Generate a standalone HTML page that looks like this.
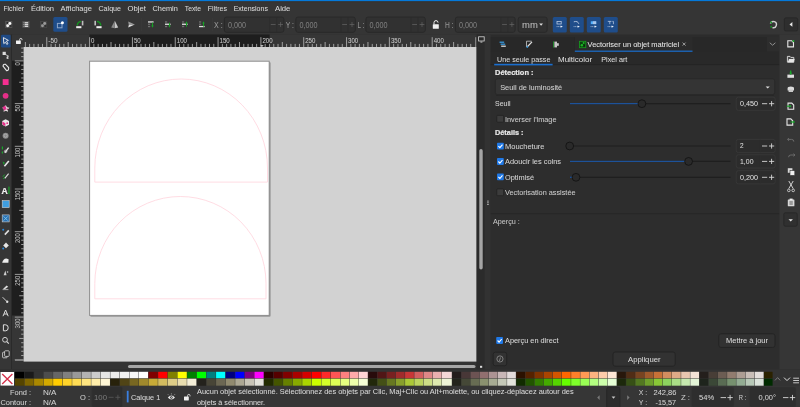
<!DOCTYPE html>
<html><head><meta charset="utf-8"><style>
html,body{margin:0;padding:0;background:#2c2c2c;overflow:hidden}
svg{display:block;will-change:transform}
text{font-family:"Liberation Sans",sans-serif}
</style></head><body>
<svg width="800" height="407" viewBox="0 0 800 407">
<rect x="0.00" y="0.00" width="800.00" height="407.00" fill="#2c2c2c" />
<rect x="0.00" y="0.00" width="800.00" height="1.50" fill="#0479da" />
<rect x="0.00" y="1.50" width="800.00" height="13.50" fill="#353535" />
<rect x="0.00" y="15.00" width="800.00" height="19.50" fill="#353535" />
<rect x="0.00" y="1.60" width="800.00" height="1.00" fill="#37332f" />
<text x="3.40" y="11.40" font-size="7.7" fill="#dadada" stroke="#dadada" stroke-width="0.05" textLength="20.6" lengthAdjust="spacingAndGlyphs" >Fichier</text>
<text x="31.00" y="11.40" font-size="7.7" fill="#dadada" stroke="#dadada" stroke-width="0.05" textLength="23.0" lengthAdjust="spacingAndGlyphs" >Édition</text>
<text x="60.60" y="11.40" font-size="7.7" fill="#dadada" stroke="#dadada" stroke-width="0.05" textLength="31.4" lengthAdjust="spacingAndGlyphs" >Affichage</text>
<text x="98.50" y="11.40" font-size="7.7" fill="#dadada" stroke="#dadada" stroke-width="0.05" textLength="22.5" lengthAdjust="spacingAndGlyphs" >Calque</text>
<text x="127.60" y="11.40" font-size="7.7" fill="#dadada" stroke="#dadada" stroke-width="0.05" textLength="18.4" lengthAdjust="spacingAndGlyphs" >Objet</text>
<text x="152.50" y="11.40" font-size="7.7" fill="#dadada" stroke="#dadada" stroke-width="0.05" textLength="25.3" lengthAdjust="spacingAndGlyphs" >Chemin</text>
<text x="184.80" y="11.40" font-size="7.7" fill="#dadada" stroke="#dadada" stroke-width="0.05" textLength="16.2" lengthAdjust="spacingAndGlyphs" >Texte</text>
<text x="207.80" y="11.40" font-size="7.7" fill="#dadada" stroke="#dadada" stroke-width="0.05" textLength="19.2" lengthAdjust="spacingAndGlyphs" >Filtres</text>
<text x="233.70" y="11.40" font-size="7.7" fill="#dadada" stroke="#dadada" stroke-width="0.05" textLength="34.2" lengthAdjust="spacingAndGlyphs" >Extensions</text>
<text x="275.00" y="11.40" font-size="7.7" fill="#dadada" stroke="#dadada" stroke-width="0.05" textLength="15.4" lengthAdjust="spacingAndGlyphs" >Aide</text>
<g opacity="1.0">
<rect x="5.15" y="21.00" width="7.10" height="6.90" fill="#555555" />
<circle cx="7.35" cy="22.80" r="0.9" fill="#1e1e1e" stroke="none" stroke-width="1" />
<circle cx="10.85" cy="26.00" r="0.9" fill="#2a2a2a" stroke="none" stroke-width="1" />
<circle cx="9.85" cy="23.50" r="1.45" fill="#ffffff" stroke="none" stroke-width="1" />
<circle cx="7.65" cy="25.70" r="1.45" fill="#f4f4f4" stroke="none" stroke-width="1" />
</g>
<rect x="22.30" y="21.00" width="7.30" height="6.90" fill="#505050" />
<rect x="24.60" y="22.10" width="3.60" height="1.30" fill="#d8d8d8" />
<rect x="22.90" y="22.30" width="1.00" height="0.90" fill="#8a8a8a" />
<rect x="24.60" y="23.90" width="3.60" height="1.30" fill="#d8d8d8" />
<rect x="22.90" y="24.10" width="1.00" height="0.90" fill="#8a8a8a" />
<rect x="24.60" y="25.70" width="3.60" height="1.30" fill="#d8d8d8" />
<rect x="22.90" y="25.90" width="1.00" height="0.90" fill="#8a8a8a" />
<g opacity="0.5">
<rect x="40.00" y="21.00" width="7.10" height="6.90" fill="#555555" />
<circle cx="42.20" cy="22.80" r="0.9" fill="#1e1e1e" stroke="none" stroke-width="1" />
<circle cx="45.70" cy="26.00" r="0.9" fill="#2a2a2a" stroke="none" stroke-width="1" />
<circle cx="44.70" cy="23.50" r="1.45" fill="#ffffff" stroke="none" stroke-width="1" />
<circle cx="42.50" cy="25.70" r="1.45" fill="#f4f4f4" stroke="none" stroke-width="1" />
</g>
<rect x="53.30" y="17.00" width="14.20" height="14.70" fill="#1f4d8a" rx="1.5" />
<rect x="57.40" y="23.40" width="4.60" height="4.40" fill="none" stroke="#8ea6c8" stroke-width="1"/>
<circle cx="62.40" cy="22.70" r="1.5" fill="#ffffff" stroke="none" stroke-width="1" />
<path d="M77.2 25.5 Q77.5 21.8 81 21.3" stroke="#139a1f" fill="none" stroke-width="1.3" />
<rect x="81.80" y="20.80" width="1.60" height="4.60" fill="#bdbdbd" />
<rect x="76.20" y="26.20" width="5.20" height="2.00" fill="#f0f0f0" />
<path d="M100.8 25.5 Q100.5 21.8 97 21.3" stroke="#139a1f" fill="none" stroke-width="1.3" />
<rect x="94.40" y="20.80" width="1.60" height="4.60" fill="#bdbdbd" />
<rect x="96.40" y="26.20" width="5.20" height="2.00" fill="#f0f0f0" />
<path d="M114.8 20.8 L118.2 27.4 L114.8 28.2 Z" stroke="none" fill="#c8c8c8" stroke-width="1" />
<path d="M114.8 20.8 L111.2 27.4 L114.8 28.2 Z" stroke="none" fill="#8a8a8a" stroke-width="1" />
<path d="M134.8 24.6 L128.2 21.6 L128.8 25 Z" stroke="none" fill="#9a9a9a" stroke-width="1" />
<path d="M134.8 24.6 L128.2 27.6 L128.8 25 Z" stroke="none" fill="#e0e0e0" stroke-width="1" />
<line x1="141.50" y1="18.00" x2="141.50" y2="31.00" stroke="#3a3a3a" stroke-width="0.6" />
<rect x="148.00" y="21.30" width="5.60" height="1.30" fill="#e0e0e0" />
<rect x="148.00" y="23.60" width="2.20" height="1.30" fill="#6e6e6e" />
<rect x="148.00" y="25.90" width="2.20" height="1.30" fill="#6e6e6e" />
<path d="M151.2 25.6 L152.5 27.8 L153.8 25.6 Z" stroke="none" fill="#17a025" stroke-width="1" />
<rect x="152.00" y="22.60" width="1.00" height="3.40" fill="#17a025" />
<rect x="165.00" y="21.30" width="2.20" height="1.30" fill="#6e6e6e" />
<rect x="165.00" y="23.60" width="5.60" height="1.30" fill="#e0e0e0" />
<rect x="165.00" y="25.90" width="2.20" height="1.30" fill="#6e6e6e" />
<path d="M168.2 25.6 L169.5 27.8 L170.8 25.6 Z" stroke="none" fill="#17a025" stroke-width="1" />
<rect x="169.00" y="22.60" width="1.00" height="3.40" fill="#17a025" />
<rect x="182.00" y="21.30" width="2.20" height="1.30" fill="#6e6e6e" />
<rect x="182.00" y="23.60" width="5.60" height="1.30" fill="#e0e0e0" />
<rect x="182.00" y="25.90" width="2.20" height="1.30" fill="#6e6e6e" />
<path d="M185.2 23.4 L186.5 21.2 L187.8 23.4 Z" stroke="none" fill="#17a025" stroke-width="1" />
<rect x="186.00" y="23.00" width="1.00" height="3.60" fill="#17a025" />
<rect x="199.00" y="21.30" width="2.20" height="1.30" fill="#6e6e6e" />
<rect x="199.00" y="23.60" width="2.20" height="1.30" fill="#6e6e6e" />
<rect x="199.00" y="25.90" width="5.60" height="1.30" fill="#e0e0e0" />
<path d="M202.2 23.4 L203.5 21.2 L204.8 23.4 Z" stroke="none" fill="#17a025" stroke-width="1" />
<rect x="203.00" y="23.00" width="1.00" height="3.60" fill="#17a025" />
<line x1="212.50" y1="18.00" x2="212.50" y2="31.00" stroke="#3a3a3a" stroke-width="0.6" />
<text x="214.00" y="27.80" font-size="8.3" fill="#979797" stroke="#979797" stroke-width="0.05" textLength="8.6" lengthAdjust="spacingAndGlyphs" >X :</text>
<rect x="224.30" y="17.00" width="59.60" height="15.30" fill="#313131" rx="2.2" stroke="#272727" stroke-width="0.8"/>
<line x1="269.60" y1="17.50" x2="269.60" y2="32.00" stroke="#2a2a2a" stroke-width="0.5" />
<line x1="276.60" y1="17.50" x2="276.60" y2="32.00" stroke="#2a2a2a" stroke-width="0.5" />
<text x="228.00" y="27.80" font-size="8.3" fill="#7e7e7e" stroke="#7e7e7e" stroke-width="0.05" textLength="18.0" lengthAdjust="spacingAndGlyphs" >0,000</text>
<line x1="270.80" y1="24.50" x2="275.60" y2="24.50" stroke="#666666" stroke-width="0.7" />
<line x1="278.20" y1="24.50" x2="283.00" y2="24.50" stroke="#666666" stroke-width="0.7" />
<line x1="280.60" y1="22.10" x2="280.60" y2="26.90" stroke="#666666" stroke-width="0.7" />
<text x="285.80" y="27.80" font-size="8.3" fill="#979797" stroke="#979797" stroke-width="0.05" textLength="8.2" lengthAdjust="spacingAndGlyphs" >Y :</text>
<rect x="295.80" y="17.00" width="59.50" height="15.30" fill="#313131" rx="2.2" stroke="#272727" stroke-width="0.8"/>
<line x1="341.00" y1="17.50" x2="341.00" y2="32.00" stroke="#2a2a2a" stroke-width="0.5" />
<line x1="348.00" y1="17.50" x2="348.00" y2="32.00" stroke="#2a2a2a" stroke-width="0.5" />
<text x="299.50" y="27.80" font-size="8.3" fill="#7e7e7e" stroke="#7e7e7e" stroke-width="0.05" textLength="18.0" lengthAdjust="spacingAndGlyphs" >0,000</text>
<line x1="342.20" y1="24.50" x2="347.00" y2="24.50" stroke="#666666" stroke-width="0.7" />
<line x1="349.60" y1="24.50" x2="354.40" y2="24.50" stroke="#666666" stroke-width="0.7" />
<line x1="352.00" y1="22.10" x2="352.00" y2="26.90" stroke="#666666" stroke-width="0.7" />
<text x="357.50" y="27.80" font-size="8.3" fill="#979797" stroke="#979797" stroke-width="0.05" textLength="6.7" lengthAdjust="spacingAndGlyphs" >L :</text>
<rect x="365.90" y="17.00" width="59.40" height="15.30" fill="#313131" rx="2.2" stroke="#272727" stroke-width="0.8"/>
<line x1="411.00" y1="17.50" x2="411.00" y2="32.00" stroke="#2a2a2a" stroke-width="0.5" />
<line x1="418.00" y1="17.50" x2="418.00" y2="32.00" stroke="#2a2a2a" stroke-width="0.5" />
<text x="369.60" y="27.80" font-size="8.3" fill="#7e7e7e" stroke="#7e7e7e" stroke-width="0.05" textLength="18.0" lengthAdjust="spacingAndGlyphs" >0,000</text>
<line x1="412.20" y1="24.50" x2="417.00" y2="24.50" stroke="#666666" stroke-width="0.7" />
<line x1="419.60" y1="24.50" x2="424.40" y2="24.50" stroke="#666666" stroke-width="0.7" />
<line x1="422.00" y1="22.10" x2="422.00" y2="26.90" stroke="#666666" stroke-width="0.7" />
<text x="445.00" y="27.80" font-size="8.3" fill="#979797" stroke="#979797" stroke-width="0.05" textLength="8.5" lengthAdjust="spacingAndGlyphs" >H :</text>
<rect x="455.30" y="17.00" width="59.90" height="15.30" fill="#313131" rx="2.2" stroke="#272727" stroke-width="0.8"/>
<line x1="500.90" y1="17.50" x2="500.90" y2="32.00" stroke="#2a2a2a" stroke-width="0.5" />
<line x1="507.90" y1="17.50" x2="507.90" y2="32.00" stroke="#2a2a2a" stroke-width="0.5" />
<text x="459.00" y="27.80" font-size="8.3" fill="#7e7e7e" stroke="#7e7e7e" stroke-width="0.05" textLength="18.0" lengthAdjust="spacingAndGlyphs" >0,000</text>
<line x1="502.10" y1="24.50" x2="506.90" y2="24.50" stroke="#666666" stroke-width="0.7" />
<line x1="509.50" y1="24.50" x2="514.30" y2="24.50" stroke="#666666" stroke-width="0.7" />
<line x1="511.90" y1="22.10" x2="511.90" y2="26.90" stroke="#666666" stroke-width="0.7" />
<rect x="432.80" y="24.20" width="6.00" height="4.60" fill="#f0f0f0" rx="0.5" />
<path d="M434 24.4 V22.6 A2 2 0 0 1 438 22.6" stroke="#f0f0f0" fill="none" stroke-width="1" />
<rect x="518.20" y="17.00" width="29.00" height="15.30" fill="#313131" rx="2.2" stroke="#272727" stroke-width="0.8"/>
<text x="522.00" y="28.20" font-size="8.5" fill="#bfbfbf" stroke="#bfbfbf" stroke-width="0.05" textLength="15.8" lengthAdjust="spacingAndGlyphs" >mm</text>
<path d="M539.2 23.6 L543 23.6 L541.1 25.8 Z" stroke="none" fill="#dddddd" stroke-width="1" />
<rect x="552.80" y="17.10" width="14.00" height="15.30" fill="#1f4d8a" rx="1.5" />
<rect x="569.80" y="17.10" width="14.00" height="15.30" fill="#1f4d8a" rx="1.5" />
<rect x="586.80" y="17.10" width="14.00" height="15.30" fill="#1f4d8a" rx="1.5" />
<rect x="603.80" y="17.10" width="14.00" height="15.30" fill="#1f4d8a" rx="1.5" />
<rect x="557.00" y="21.40" width="4.20" height="2.60" fill="none" stroke="#b8c8e0" stroke-width="0.8"/>
<path d="M556.5999999999999 26.6 H560.8" stroke="#b8c8e0" fill="none" stroke-width="0.8" stroke-dasharray="1 0.6"/>
<path d="M560.5999999999999 25.4 L562.8 26.6 L560.5999999999999 27.8 Z" stroke="none" fill="#e8eef8" stroke-width="1" />
<path d="M573.8 21.8 Q577.8 20.6 578.8 23.8" stroke="#b8c8e0" fill="none" stroke-width="0.9" />
<path d="M573.5999999999999 26.6 H577.8" stroke="#b8c8e0" fill="none" stroke-width="0.8" stroke-dasharray="1 0.6"/>
<path d="M577.5999999999999 25.4 L579.8 26.6 L577.5999999999999 27.8 Z" stroke="none" fill="#e8eef8" stroke-width="1" />
<rect x="590.80" y="21.30" width="5.40" height="2.80" fill="#4fb0ff" />
<rect x="592.80" y="21.30" width="3.40" height="2.80" fill="#a8c4e8" />
<path d="M590.5999999999999 26.6 H594.8" stroke="#b8c8e0" fill="none" stroke-width="0.8" stroke-dasharray="1 0.6"/>
<path d="M594.5999999999999 25.4 L596.8 26.6 L594.5999999999999 27.8 Z" stroke="none" fill="#e8eef8" stroke-width="1" />
<path d="M607.8 21.4 H611.4 M609.8 21.4 V24.2 M612.4 21.4 H613.4 V24.2" stroke="#b8c8e0" fill="none" stroke-width="0.8" />
<path d="M607.5999999999999 26.6 H611.8" stroke="#b8c8e0" fill="none" stroke-width="0.8" stroke-dasharray="1 0.6"/>
<path d="M611.5999999999999 25.4 L613.8 26.6 L611.5999999999999 27.8 Z" stroke="none" fill="#e8eef8" stroke-width="1" />
<circle cx="773.30" cy="24.60" r="3.1" fill="none" stroke="#d0d0d0" stroke-width="1.4" stroke-dasharray="14 6" transform="rotate(200 773.3 24.6)"/>
<circle cx="771.20" cy="22.40" r="0.9" fill="#10a020" stroke="none" stroke-width="1" />
<circle cx="771.20" cy="26.80" r="0.9" fill="#10a020" stroke="none" stroke-width="1" />
<rect x="784.30" y="17.80" width="13.40" height="13.20" fill="#2e2e2e" rx="1.5" stroke="#242424" stroke-width="0.6"/>
<path d="M789.5 24.4 L792.4 22 L792.4 26.8 Z" stroke="none" fill="#e8e8e8" stroke-width="1" />
<rect x="0.00" y="34.50" width="12.00" height="335.00" fill="#363636" />
<line x1="11.60" y1="34.50" x2="11.60" y2="369.50" stroke="#262626" stroke-width="0.8" />
<rect x="1.00" y="34.80" width="9.60" height="12.70" fill="#1f4a85" rx="1.2" />
<path d="M3.4 37.6 L8.4 40.4 L6.4 41.2 L8 43.6 L6.8 44.4 L5.4 42.2 L3.8 43.6 Z" stroke="#f0f0f0" fill="#1f4a85" stroke-width="0.9" />
<rect x="2.60" y="51.80" width="3.20" height="3.20" fill="#dcdcdc" />
<path d="M5.2 54.4 L8.6 56.2 L7 56.8 L7.8 58.4" stroke="#dcdcdc" fill="none" stroke-width="0.8" />
<rect x="6.60" y="57.20" width="1.80" height="1.60" fill="#dcdcdc" />
<path d="M3 66.2 Q3.4 63.8 5.6 64.4 L8.6 67.6 Q9 70.6 6.6 70.6 Z" stroke="#e8e8e8" fill="none" stroke-width="1.1" />
<rect x="2.70" y="79.10" width="5.90" height="5.90" fill="#f52f91" />
<circle cx="5.60" cy="95.80" r="2.9" fill="#e52f88" stroke="none" stroke-width="1" />
<path d="M5.80 105.00 L6.98 107.18 L9.41 107.63 L7.70 109.42 L8.03 111.87 L5.80 110.80 L3.57 111.87 L3.90 109.42 L2.19 107.63 L4.62 107.18 Z" stroke="none" fill="#ececec" stroke-width="1" />
<path d="M2.4 107.6 L5 105.4 L6.6 108.6 L4.6 110.8 Z" stroke="none" fill="#e0308c" stroke-width="1" />
<circle cx="7.40" cy="109.40" r="0.8" fill="#b04070" stroke="none" stroke-width="1" />
<path d="M5.6 119.2 L9 121 V124.8 L5.6 126.6 L2.2 124.8 V121 Z" stroke="none" fill="#e8e8e8" stroke-width="1" />
<path d="M2.4 121.6 L5.4 123.2 L5.4 126.2 L2.4 124.6 Z" stroke="none" fill="#e52f88" stroke-width="1" />
<circle cx="7.20" cy="123.20" r="0.9" fill="#e52f88" stroke="none" stroke-width="1" />
<circle cx="5.60" cy="135.70" r="3" fill="#8a8a8a" stroke="none" stroke-width="1" />
<circle cx="5.60" cy="135.70" r="1.6" fill="none" stroke="#c0c0c0" stroke-width="0.6" />
<path d="M2.4 146.6 V149.4 M2.4 151.4 V153.4" stroke="#19a82a" fill="none" stroke-width="1.2" />
<path d="M5 152.6 L8.6 147.6" stroke="#e0e0e0" fill="none" stroke-width="1.4" />
<circle cx="5.60" cy="151.40" r="1.2" fill="none" stroke="#e0e0e0" stroke-width="0.7" />
<path d="M2.6 161.4 L4.8 162.8 L3.8 165 Z" stroke="none" fill="#19a82a" stroke-width="1" />
<path d="M4.4 166.2 L8.8 161" stroke="#e8e8e8" fill="none" stroke-width="1.6" />
<path d="M2.8 176.8 L4.6 174.6 M3.2 179 L5 177" stroke="#19a82a" fill="none" stroke-width="1" />
<path d="M4.8 178.4 L8.6 173.6" stroke="#dcdcdc" fill="none" stroke-width="1.1" />
<text x="1.60" y="193.60" font-size="8.6" fill="#f1f1f1" stroke="#f1f1f1" stroke-width="0.22" textLength="6.2" lengthAdjust="spacingAndGlyphs" font-weight="bold" >A</text>
<rect x="8.40" y="186.60" width="1.10" height="7.40" fill="#19a82a" />
<rect x="2.20" y="200.60" width="7.00" height="7.00" fill="#3f9ee0" stroke="#d0d0d0" stroke-width="0.6"/>
<rect x="2.20" y="214.90" width="7.00" height="7.00" fill="#2a6fb0" stroke="#d0d0d0" stroke-width="0.6"/>
<path d="M3.6 216.4 L7.8 220.6 M7.8 216.4 L3.6 220.6" stroke="#7cc8f0" fill="none" stroke-width="0.9" />
<path d="M4.8 234.6 L8.8 230.4" stroke="#e0e0e0" fill="none" stroke-width="1.6" />
<circle cx="3.20" cy="229.80" r="1" fill="#2a8ae0" stroke="none" stroke-width="1" />
<path d="M6 242.6 L8.8 245.4 L6 248.2 L3.2 245.4 Z" stroke="none" fill="#e6e6e6" stroke-width="1" />
<circle cx="3.20" cy="248.60" r="1" fill="#2a8ae0" stroke="none" stroke-width="1" />
<path d="M2.2 262.8 Q3 258.6 6.4 258.4 L8.6 259.2 L8.4 262.8 Z" stroke="none" fill="#eeeeee" stroke-width="1" />
<path d="M3.6 275.2 L5.4 270.4 L6.6 275.2 Z" stroke="none" fill="#d0d0d0" stroke-width="1" />
<circle cx="7.60" cy="272.00" r="0.8" fill="#d0d0d0" stroke="none" stroke-width="1" />
<path d="M3 289 L6.6 285.4 L8.2 286.8 L5.2 289 Z" stroke="none" fill="#dcdcdc" stroke-width="1" />
<line x1="2.60" y1="289.60" x2="8.40" y2="289.60" stroke="#dcdcdc" stroke-width="0.7" />
<path d="M2.6 297.2 L6.4 301" stroke="#e0e0e0" fill="none" stroke-width="0.9" />
<circle cx="7.20" cy="301.80" r="1.2" fill="#e0e0e0" stroke="none" stroke-width="1" />
<path d="M3 316.2 L5.6 310 L8.2 316.2 M4 314 H7.2" stroke="#dcdcdc" fill="none" stroke-width="1" />
<path d="M3.4 324.8 H5.6 Q8.2 324.8 8.2 327.8 Q8.2 330.8 5.6 330.8 H3.4 Z" stroke="#e0e0e0" fill="none" stroke-width="1" />
<circle cx="5.00" cy="339.80" r="2.4" fill="none" stroke="#e0e0e0" stroke-width="0.9" />
<path d="M6.8 341.6 L8.8 343.6" stroke="#e0e0e0" fill="none" stroke-width="1.1" />
<rect x="2.60" y="352.20" width="4.60" height="5.60" fill="none" rx="0.8" stroke="#dcdcdc" stroke-width="0.8"/>
<rect x="4.60" y="350.80" width="4.60" height="5.60" fill="#2e2e2e" rx="0.8" stroke="#dcdcdc" stroke-width="0.8"/>
<rect x="12.00" y="34.50" width="465.00" height="12.50" fill="#363636" />
<rect x="89.50" y="34.50" width="180.10" height="12.50" fill="#1e1e1e" />
<rect x="12.00" y="47.00" width="11.60" height="314.50" fill="#363636" />
<rect x="12.00" y="60.75" width="11.60" height="254.70" fill="#1e1e1e" />
<rect x="16.00" y="40.40" width="4.80" height="3.60" fill="#f2f2f2" rx="0.4" />
<path d="M19.6 40.6 V39.6 A1.2 1.2 0 0 1 22 39.6 V40.2" stroke="#f2f2f2" fill="none" stroke-width="0.8" />
<path d="M25.36 42 V47 M29.64 43.9 V47 M33.93 43.9 V47 M38.21 43.9 V47 M42.49 43.9 V47 M46.77 37.2 V47 M51.06 43.9 V47 M55.34 43.9 V47 M59.62 43.9 V47 M63.90 43.9 V47 M68.19 42 V47 M72.47 43.9 V47 M76.75 43.9 V47 M81.03 43.9 V47 M85.32 43.9 V47 M89.60 37.2 V47 M93.88 43.9 V47 M98.16 43.9 V47 M102.45 43.9 V47 M106.73 43.9 V47 M111.01 42 V47 M115.29 43.9 V47 M119.58 43.9 V47 M123.86 43.9 V47 M128.14 43.9 V47 M132.43 37.2 V47 M136.71 43.9 V47 M140.99 43.9 V47 M145.27 43.9 V47 M149.56 43.9 V47 M153.84 42 V47 M158.12 43.9 V47 M162.40 43.9 V47 M166.69 43.9 V47 M170.97 43.9 V47 M175.25 37.2 V47 M179.53 43.9 V47 M183.81 43.9 V47 M188.10 43.9 V47 M192.38 43.9 V47 M196.66 42 V47 M200.94 43.9 V47 M205.23 43.9 V47 M209.51 43.9 V47 M213.79 43.9 V47 M218.07 37.2 V47 M222.36 43.9 V47 M226.64 43.9 V47 M230.92 43.9 V47 M235.21 43.9 V47 M239.49 42 V47 M243.77 43.9 V47 M248.05 43.9 V47 M252.34 43.9 V47 M256.62 43.9 V47 M260.90 37.2 V47 M265.18 43.9 V47 M269.47 43.9 V47 M273.75 43.9 V47 M278.03 43.9 V47 M282.31 42 V47 M286.60 43.9 V47 M290.88 43.9 V47 M295.16 43.9 V47 M299.44 43.9 V47 M303.73 37.2 V47 M308.01 43.9 V47 M312.29 43.9 V47 M316.57 43.9 V47 M320.86 43.9 V47 M325.14 42 V47 M329.42 43.9 V47 M333.70 43.9 V47 M337.99 43.9 V47 M342.27 43.9 V47 M346.55 37.2 V47 M350.83 43.9 V47 M355.12 43.9 V47 M359.40 43.9 V47 M363.68 43.9 V47 M367.96 42 V47 M372.25 43.9 V47 M376.53 43.9 V47 M380.81 43.9 V47 M385.09 43.9 V47 M389.38 37.2 V47 M393.66 43.9 V47 M397.94 43.9 V47 M402.22 43.9 V47 M406.50 43.9 V47 M410.79 42 V47 M415.07 43.9 V47 M419.35 43.9 V47 M423.63 43.9 V47 M427.92 43.9 V47 M432.20 37.2 V47 M436.48 43.9 V47 M440.76 43.9 V47 M445.05 43.9 V47 M449.33 43.9 V47 M453.61 42 V47 M457.89 43.9 V47 M462.18 43.9 V47 M466.46 43.9 V47 M470.74 43.9 V47 M475.8 37.2 V47" stroke="#c4c4c4" fill="none" stroke-width="0.75" />
<text x="48.27" y="43.00" font-size="6.6" fill="#c9c9c9" stroke="#c9c9c9" stroke-width="0.05" textLength="9.2" lengthAdjust="spacingAndGlyphs" >-50</text>
<text x="91.10" y="43.00" font-size="6.6" fill="#c9c9c9" stroke="#c9c9c9" stroke-width="0.05" textLength="3.4" lengthAdjust="spacingAndGlyphs" >0</text>
<text x="133.93" y="43.00" font-size="6.6" fill="#c9c9c9" stroke="#c9c9c9" stroke-width="0.05" textLength="6.8" lengthAdjust="spacingAndGlyphs" >50</text>
<text x="176.75" y="43.00" font-size="6.6" fill="#c9c9c9" stroke="#c9c9c9" stroke-width="0.05" textLength="10.2" lengthAdjust="spacingAndGlyphs" >100</text>
<text x="219.57" y="43.00" font-size="6.6" fill="#c9c9c9" stroke="#c9c9c9" stroke-width="0.05" textLength="10.2" lengthAdjust="spacingAndGlyphs" >150</text>
<text x="262.40" y="43.00" font-size="6.6" fill="#c9c9c9" stroke="#c9c9c9" stroke-width="0.05" textLength="10.2" lengthAdjust="spacingAndGlyphs" >200</text>
<text x="305.23" y="43.00" font-size="6.6" fill="#c9c9c9" stroke="#c9c9c9" stroke-width="0.05" textLength="10.2" lengthAdjust="spacingAndGlyphs" >250</text>
<text x="348.05" y="43.00" font-size="6.6" fill="#c9c9c9" stroke="#c9c9c9" stroke-width="0.05" textLength="10.2" lengthAdjust="spacingAndGlyphs" >300</text>
<text x="390.88" y="43.00" font-size="6.6" fill="#c9c9c9" stroke="#c9c9c9" stroke-width="0.05" textLength="10.2" lengthAdjust="spacingAndGlyphs" >350</text>
<text x="433.70" y="43.00" font-size="6.6" fill="#c9c9c9" stroke="#c9c9c9" stroke-width="0.05" textLength="10.2" lengthAdjust="spacingAndGlyphs" >400</text>
<path d="M260.3 45.2 L263.6 45.2 L261.95 47 Z" stroke="none" fill="#e8e8e8" stroke-width="1" />
<path d="M21.2 48.09 H23.6 M21.2 52.36 H23.6 M21.2 56.63 H23.6 M14.8 60.90 H23.6 M21.2 65.17 H23.6 M21.2 69.44 H23.6 M21.2 73.71 H23.6 M21.2 77.98 H23.6 M19.2 82.25 H23.6 M21.2 86.52 H23.6 M21.2 90.79 H23.6 M21.2 95.06 H23.6 M21.2 99.33 H23.6 M14.8 103.60 H23.6 M21.2 107.87 H23.6 M21.2 112.14 H23.6 M21.2 116.41 H23.6 M21.2 120.68 H23.6 M19.2 124.95 H23.6 M21.2 129.22 H23.6 M21.2 133.49 H23.6 M21.2 137.76 H23.6 M21.2 142.03 H23.6 M14.8 146.30 H23.6 M21.2 150.57 H23.6 M21.2 154.84 H23.6 M21.2 159.11 H23.6 M21.2 163.38 H23.6 M19.2 167.65 H23.6 M21.2 171.92 H23.6 M21.2 176.19 H23.6 M21.2 180.46 H23.6 M21.2 184.73 H23.6 M14.8 189.00 H23.6 M21.2 193.27 H23.6 M21.2 197.54 H23.6 M21.2 201.81 H23.6 M21.2 206.08 H23.6 M19.2 210.35 H23.6 M21.2 214.62 H23.6 M21.2 218.89 H23.6 M21.2 223.16 H23.6 M21.2 227.43 H23.6 M14.8 231.70 H23.6 M21.2 235.97 H23.6 M21.2 240.24 H23.6 M21.2 244.51 H23.6 M21.2 248.78 H23.6 M19.2 253.05 H23.6 M21.2 257.32 H23.6 M21.2 261.59 H23.6 M21.2 265.86 H23.6 M21.2 270.13 H23.6 M14.8 274.40 H23.6 M21.2 278.67 H23.6 M21.2 282.94 H23.6 M21.2 287.21 H23.6 M21.2 291.48 H23.6 M19.2 295.75 H23.6 M21.2 300.02 H23.6 M21.2 304.29 H23.6 M21.2 308.56 H23.6 M21.2 312.83 H23.6 M14.8 317.10 H23.6 M21.2 321.37 H23.6 M21.2 325.64 H23.6 M21.2 329.91 H23.6 M21.2 334.18 H23.6 M19.2 338.45 H23.6 M21.2 342.72 H23.6 M21.2 346.99 H23.6 M21.2 351.26 H23.6 M21.2 355.53 H23.6 M14.8 359.80 H23.6" stroke="#c4c4c4" fill="none" stroke-width="0.75" />
<text x="0" y="0" font-size="6.8" fill="#c4c4c4" text-anchor="end" textLength="3.3" lengthAdjust="spacingAndGlyphs" transform="translate(20.2 62.30) rotate(-90)">0</text>
<text x="0" y="0" font-size="6.8" fill="#c4c4c4" text-anchor="end" textLength="6.6" lengthAdjust="spacingAndGlyphs" transform="translate(20.2 105.00) rotate(-90)">50</text>
<text x="0" y="0" font-size="6.8" fill="#c4c4c4" text-anchor="end" textLength="9.9" lengthAdjust="spacingAndGlyphs" transform="translate(20.2 147.70) rotate(-90)">100</text>
<text x="0" y="0" font-size="6.8" fill="#c4c4c4" text-anchor="end" textLength="9.9" lengthAdjust="spacingAndGlyphs" transform="translate(20.2 190.40) rotate(-90)">150</text>
<text x="0" y="0" font-size="6.8" fill="#c4c4c4" text-anchor="end" textLength="9.9" lengthAdjust="spacingAndGlyphs" transform="translate(20.2 233.10) rotate(-90)">200</text>
<text x="0" y="0" font-size="6.8" fill="#c4c4c4" text-anchor="end" textLength="9.9" lengthAdjust="spacingAndGlyphs" transform="translate(20.2 275.80) rotate(-90)">250</text>
<text x="0" y="0" font-size="6.8" fill="#c4c4c4" text-anchor="end" textLength="9.9" lengthAdjust="spacingAndGlyphs" transform="translate(20.2 318.50) rotate(-90)">300</text>
<line x1="15.00" y1="360.70" x2="23.60" y2="360.70" stroke="#8a8a8a" stroke-width="1" />
<rect x="12.00" y="361.00" width="464.60" height="8.60" fill="#333333" />
<rect x="23.60" y="47.00" width="453.00" height="314.60" fill="#d2d2d2" />
<rect x="90.40" y="62.20" width="180.40" height="254.80" fill="#c0c0c0" rx="1" />
<rect x="90.20" y="62.00" width="180.20" height="254.40" fill="#8a8a8a" rx="1" />
<rect x="89.60" y="61.20" width="179.60" height="254.20" fill="#ffffff" stroke="#8e8e8e" stroke-width="1"/>
<path d="M94.8 182.1 L94.8 168 A86.35 89 0 0 1 267.5 168 L267.5 182.1 Z" stroke="#ffd6de" fill="none" stroke-width="0.85" />
<path d="M94.8 298.8 L94.8 283.5 A85.6 87 0 0 1 266 283.5 L266 298.8 Z" stroke="#ffd6de" fill="none" stroke-width="0.85" />
<rect x="476.60" y="34.50" width="8.00" height="335.00" fill="#2b2b2b" />
<rect x="484.60" y="34.50" width="6.20" height="335.00" fill="#323232" />
<rect x="128.00" y="364.90" width="347.50" height="3.20" fill="#a6a6a6" rx="1.6" />
<rect x="479.30" y="149.00" width="3.40" height="120.50" fill="#a6a6a6" rx="1.7" />
<rect x="480.00" y="365.80" width="2.20" height="2.00" fill="#d8d8d8" />
<rect x="478.60" y="36.80" width="5.60" height="4.20" fill="none" stroke="#d8d8d8" stroke-width="0.8"/>
<rect x="480.40" y="41.60" width="2.00" height="0.90" fill="#d8d8d8" />
<rect x="487.20" y="200.60" width="1.50" height="1.00" fill="#b8b8b8" />
<rect x="487.20" y="202.30" width="1.50" height="1.00" fill="#b8b8b8" />
<rect x="487.20" y="204.00" width="1.50" height="1.00" fill="#b8b8b8" />
<rect x="490.80" y="37.00" width="288.70" height="332.50" fill="#2d2d2d" />
<rect x="490.80" y="37.00" width="288.70" height="14.80" fill="#282828" />
<rect x="574.50" y="37.00" width="118.00" height="14.80" fill="#2b2b2b" />
<rect x="574.50" y="50.60" width="118.00" height="1.60" fill="#1a6fcf" />
<line x1="574.50" y1="37.00" x2="574.50" y2="52.00" stroke="#252525" stroke-width="0.6" />
<rect x="767.00" y="37.00" width="12.50" height="14.80" fill="#2d2d2d" />
<path d="M769.8 42.8 L772.6 45.2 L775.4 42.8" stroke="#9a9a9a" fill="none" stroke-width="0.9" />
<rect x="499.60" y="41.60" width="4.60" height="1.20" fill="#3aa0e8" />
<rect x="500.60" y="43.60" width="4.60" height="1.20" fill="#3aa0e8" />
<rect x="501.20" y="45.60" width="4.60" height="1.20" fill="#e8e8e8" />
<path d="M526.5 47 V41.2 H531.6" stroke="#c8c8c8" fill="none" stroke-width="0.8" />
<line x1="527.60" y1="46.50" x2="532.00" y2="41.80" stroke="#e0e0e0" stroke-width="1.2" />
<circle cx="527.30" cy="46.90" r="0.9" fill="#3aa0e8" stroke="none" stroke-width="1" />
<rect x="553.20" y="41.40" width="0.90" height="6.20" fill="#22a030" />
<rect x="554.40" y="41.60" width="2.60" height="5.80" fill="#c8c8c8" />
<rect x="557.00" y="43.20" width="1.80" height="2.60" fill="#c8c8c8" />
<rect x="579.40" y="41.30" width="6.40" height="6.40" fill="#0c3f10" stroke="#17a01e" stroke-width="0.8"/>
<circle cx="581.90" cy="45.30" r="1.3" fill="#1cb424" stroke="none" stroke-width="1" />
<circle cx="583.60" cy="42.90" r="1.0" fill="#1cb424" stroke="none" stroke-width="1" />
<circle cx="584.20" cy="45.60" r="0.8" fill="#0a2a0c" stroke="none" stroke-width="1" />
<text x="587.60" y="47.00" font-size="7.7" fill="#e4e4e4" stroke="#e4e4e4" stroke-width="0.05" textLength="91.5" lengthAdjust="spacingAndGlyphs" >Vectoriser un objet matriciel</text>
<path d="M682.6 42.6 L685.6 45.6 M685.6 42.6 L682.6 45.6" stroke="#b8b8b8" fill="none" stroke-width="0.8" />
<rect x="490.80" y="51.80" width="288.70" height="13.00" fill="#292929" />
<text x="497.00" y="62.00" font-size="7.7" fill="#dddddd" stroke="#dddddd" stroke-width="0.05" textLength="53.4" lengthAdjust="spacingAndGlyphs" >Une seule passe</text>
<text x="558.00" y="62.00" font-size="7.7" fill="#dddddd" stroke="#dddddd" stroke-width="0.05" textLength="34.2" lengthAdjust="spacingAndGlyphs" >Multicolor</text>
<text x="601.20" y="62.00" font-size="7.7" fill="#dddddd" stroke="#dddddd" stroke-width="0.05" textLength="26.2" lengthAdjust="spacingAndGlyphs" >Pixel art</text>
<rect x="490.80" y="64.80" width="288.70" height="148.80" fill="#2d2d2d" />
<line x1="490.80" y1="64.60" x2="779.50" y2="64.60" stroke="#232323" stroke-width="0.8" />
<rect x="494.20" y="63.80" width="58.40" height="1.60" fill="#1a6fcf" />
<line x1="490.80" y1="213.60" x2="779.50" y2="213.60" stroke="#262626" stroke-width="0.8" />
<text x="495.00" y="75.20" font-size="7.7" fill="#e8e8e8" stroke="#e8e8e8" stroke-width="0.22" textLength="38.5" lengthAdjust="spacingAndGlyphs" font-weight="bold" >Détection :</text>
<line x1="496.00" y1="95.20" x2="774.00" y2="95.20" stroke="#252525" stroke-width="1" />
<rect x="495.30" y="78.80" width="279.40" height="15.80" fill="#343434" rx="2.2" stroke="#272727" stroke-width="0.8"/>
<text x="500.20" y="89.90" font-size="7.7" fill="#d3d3d3" stroke="#d3d3d3" stroke-width="0.05" textLength="62.0" lengthAdjust="spacingAndGlyphs" >Seuil de luminosité</text>
<path d="M765.6 86.4 L769.8 86.4 L767.7 88.6 Z" stroke="none" fill="#dedede" stroke-width="1" />
<text x="495.00" y="106.40" font-size="7.7" fill="#d6d6d6" stroke="#d6d6d6" stroke-width="0.05" textLength="15.5" lengthAdjust="spacingAndGlyphs" >Seuil</text>
<line x1="570.00" y1="103.70" x2="730.50" y2="103.70" stroke="#1f1f1f" stroke-width="1.2" />
<line x1="570.00" y1="103.70" x2="641.90" y2="103.70" stroke="#1d5299" stroke-width="1.3" />
<circle cx="641.90" cy="103.70" r="3.9" fill="#2a2a2a" stroke="#101010" stroke-width="0.8" />
<rect x="736.20" y="97.10" width="39.00" height="13.20" fill="#2c2c2c" rx="2.2" stroke="#3a3a3a" stroke-width="0.8"/>
<line x1="760.40" y1="97.30" x2="760.40" y2="110.10" stroke="#303030" stroke-width="0.5" />
<text x="740.00" y="106.00" font-size="7.7" fill="#dfdfdf" stroke="#dfdfdf" stroke-width="0.05" textLength="18.0" lengthAdjust="spacingAndGlyphs" >0,450</text>
<line x1="762.00" y1="103.70" x2="767.20" y2="103.70" stroke="#d8d8d8" stroke-width="0.9" />
<line x1="769.00" y1="103.70" x2="774.20" y2="103.70" stroke="#d8d8d8" stroke-width="0.9" />
<line x1="771.60" y1="101.10" x2="771.60" y2="106.30" stroke="#d8d8d8" stroke-width="0.9" />
<rect x="496.80" y="115.40" width="6.80" height="6.80" fill="#3c3c3c" rx="0.8" stroke="#222222" stroke-width="0.8"/>
<text x="505.00" y="121.60" font-size="7.7" fill="#cdcdcd" stroke="#cdcdcd" stroke-width="0.05" textLength="51.5" lengthAdjust="spacingAndGlyphs" >Inverser l'image</text>
<text x="495.00" y="135.00" font-size="7.7" fill="#e8e8e8" stroke="#e8e8e8" stroke-width="0.22" textLength="28.5" lengthAdjust="spacingAndGlyphs" font-weight="bold" >Détails :</text>
<rect x="497.00" y="142.70" width="6.80" height="6.80" fill="#1f78e6" rx="0.8" />
<path d="M498.4 146.1 L499.9 147.7 L502.5 144.6" stroke="#ffffff" fill="none" stroke-width="1.1" />
<text x="505.00" y="148.80" font-size="7.7" fill="#d6d6d6" stroke="#d6d6d6" stroke-width="0.05" textLength="39.5" lengthAdjust="spacingAndGlyphs" >Moucheture</text>
<line x1="570.00" y1="146.00" x2="730.50" y2="146.00" stroke="#1f1f1f" stroke-width="1.2" />
<circle cx="569.70" cy="146.00" r="3.9" fill="#2a2a2a" stroke="#101010" stroke-width="0.8" />
<rect x="736.20" y="139.40" width="39.00" height="13.20" fill="#2c2c2c" rx="2.2" stroke="#3a3a3a" stroke-width="0.8"/>
<line x1="760.40" y1="139.60" x2="760.40" y2="152.40" stroke="#303030" stroke-width="0.5" />
<text x="740.00" y="148.30" font-size="7.7" fill="#dfdfdf" stroke="#dfdfdf" stroke-width="0.05" textLength="3.6" lengthAdjust="spacingAndGlyphs" >2</text>
<line x1="762.00" y1="146.00" x2="767.20" y2="146.00" stroke="#d8d8d8" stroke-width="0.9" />
<line x1="769.00" y1="146.00" x2="774.20" y2="146.00" stroke="#d8d8d8" stroke-width="0.9" />
<line x1="771.60" y1="143.40" x2="771.60" y2="148.60" stroke="#d8d8d8" stroke-width="0.9" />
<rect x="497.00" y="158.10" width="6.80" height="6.80" fill="#1f78e6" rx="0.8" />
<path d="M498.4 161.5 L499.9 163.1 L502.5 160.0" stroke="#ffffff" fill="none" stroke-width="1.1" />
<text x="505.00" y="164.20" font-size="7.7" fill="#d6d6d6" stroke="#d6d6d6" stroke-width="0.05" textLength="56.0" lengthAdjust="spacingAndGlyphs" >Adoucir les coins</text>
<line x1="570.00" y1="161.40" x2="730.50" y2="161.40" stroke="#1f1f1f" stroke-width="1.2" />
<line x1="570.00" y1="161.40" x2="688.60" y2="161.40" stroke="#1d5299" stroke-width="1.3" />
<circle cx="688.60" cy="161.40" r="3.9" fill="#2a2a2a" stroke="#101010" stroke-width="0.8" />
<rect x="736.20" y="154.80" width="39.00" height="13.20" fill="#2c2c2c" rx="2.2" stroke="#3a3a3a" stroke-width="0.8"/>
<line x1="760.40" y1="155.00" x2="760.40" y2="167.80" stroke="#303030" stroke-width="0.5" />
<text x="740.00" y="163.70" font-size="7.7" fill="#dfdfdf" stroke="#dfdfdf" stroke-width="0.05" textLength="13.5" lengthAdjust="spacingAndGlyphs" >1,00</text>
<line x1="762.00" y1="161.40" x2="767.20" y2="161.40" stroke="#d8d8d8" stroke-width="0.9" />
<line x1="769.00" y1="161.40" x2="774.20" y2="161.40" stroke="#d8d8d8" stroke-width="0.9" />
<line x1="771.60" y1="158.80" x2="771.60" y2="164.00" stroke="#d8d8d8" stroke-width="0.9" />
<rect x="497.00" y="173.50" width="6.80" height="6.80" fill="#1f78e6" rx="0.8" />
<path d="M498.4 176.9 L499.9 178.5 L502.5 175.4" stroke="#ffffff" fill="none" stroke-width="1.1" />
<text x="505.00" y="179.60" font-size="7.7" fill="#d6d6d6" stroke="#d6d6d6" stroke-width="0.05" textLength="29.0" lengthAdjust="spacingAndGlyphs" >Optimisé</text>
<line x1="570.00" y1="177.30" x2="730.50" y2="177.30" stroke="#1f1f1f" stroke-width="1.2" />
<line x1="570.00" y1="177.30" x2="576.00" y2="177.30" stroke="#1d5299" stroke-width="1.3" />
<circle cx="576.00" cy="177.30" r="3.9" fill="#2a2a2a" stroke="#101010" stroke-width="0.8" />
<rect x="736.20" y="170.70" width="39.00" height="13.20" fill="#2c2c2c" rx="2.2" stroke="#3a3a3a" stroke-width="0.8"/>
<line x1="760.40" y1="170.90" x2="760.40" y2="183.70" stroke="#303030" stroke-width="0.5" />
<text x="740.00" y="179.60" font-size="7.7" fill="#dfdfdf" stroke="#dfdfdf" stroke-width="0.05" textLength="18.0" lengthAdjust="spacingAndGlyphs" >0,200</text>
<line x1="762.00" y1="177.30" x2="767.20" y2="177.30" stroke="#d8d8d8" stroke-width="0.9" />
<line x1="769.00" y1="177.30" x2="774.20" y2="177.30" stroke="#d8d8d8" stroke-width="0.9" />
<line x1="771.60" y1="174.70" x2="771.60" y2="179.90" stroke="#d8d8d8" stroke-width="0.9" />
<rect x="496.80" y="188.90" width="6.80" height="6.80" fill="#3c3c3c" rx="0.8" stroke="#222222" stroke-width="0.8"/>
<text x="505.00" y="195.10" font-size="7.7" fill="#cdcdcd" stroke="#cdcdcd" stroke-width="0.05" textLength="70.5" lengthAdjust="spacingAndGlyphs" >Vectorisation assistée</text>
<text x="493.00" y="223.60" font-size="7.7" fill="#c6c6c6" stroke="#c6c6c6" stroke-width="0.05" textLength="26.8" lengthAdjust="spacingAndGlyphs" >Aperçu :</text>
<rect x="496.20" y="337.10" width="6.80" height="6.80" fill="#1f78e6" rx="0.8" />
<path d="M497.59999999999997 340.5 L499.09999999999997 342.1 L501.7 339.0" stroke="#ffffff" fill="none" stroke-width="1.1" />
<text x="505.00" y="343.40" font-size="7.7" fill="#dbdbdb" stroke="#dbdbdb" stroke-width="0.05" textLength="53.5" lengthAdjust="spacingAndGlyphs" >Aperçu en direct</text>
<rect x="718.80" y="333.80" width="56.20" height="13.60" fill="#323232" rx="2.2" stroke="#232323" stroke-width="0.9"/>
<text x="726.00" y="343.40" font-size="7.7" fill="#dbdbdb" stroke="#dbdbdb" stroke-width="0.05" textLength="42.0" lengthAdjust="spacingAndGlyphs" >Mettre à jour</text>
<rect x="493.20" y="352.20" width="13.50" height="13.60" fill="#323232" rx="2.2" stroke="#232323" stroke-width="0.9"/>
<circle cx="499.95" cy="358.95" r="3.1" fill="none" stroke="#a0a0a0" stroke-width="0.7" />
<text x="499.90" y="361.20" font-size="6" fill="#a9a9a9" stroke="#a9a9a9" stroke-width="0.05" text-anchor="middle" font-style="italic">i</text>
<rect x="613.00" y="352.00" width="62.20" height="14.20" fill="#323232" rx="2.2" stroke="#232323" stroke-width="0.9"/>
<text x="628.00" y="361.70" font-size="7.7" fill="#dbdbdb" stroke="#dbdbdb" stroke-width="0.05" textLength="32.5" lengthAdjust="spacingAndGlyphs" >Appliquer</text>
<rect x="779.50" y="34.50" width="20.50" height="335.00" fill="#363636" />
<path d="M787.8000000000001 40.699999999999996 H791.6 L793.5 42.599999999999994 V46.9 H787.8000000000001 Z" stroke="#e6e6e6" fill="#3a3a3a" stroke-width="1.1" />
<circle cx="793.40" cy="41.00" r="1.1" fill="#19a82a" stroke="none" stroke-width="1" />
<path d="M787.4 56.4 H790 L790.8 57.4 H793.8 V62.2 H787.4 Z" stroke="#e0e0e0" fill="#4a4a4a" stroke-width="0.9" />
<path d="M787.8 62.2 L789 59 H794.6 L793.6 62.2 Z" stroke="none" fill="#e6e6e6" stroke-width="1" />
<rect x="787.40" y="74.60" width="6.60" height="3.20" fill="#e0e0e0" />
<path d="M790.7 70.6 V74.2" stroke="#19a82a" fill="none" stroke-width="1.3" />
<path d="M789.2 72.8 L790.7 74.8 L792.2 72.8 Z" stroke="none" fill="#19a82a" stroke-width="1" />
<path d="M787.6 90.4 V88 Q787.6 86.4 790.8 86.4 Q794 86.4 794 88 V90.4 Z" stroke="none" fill="#dcdcdc" stroke-width="1" />
<rect x="788.60" y="89.60" width="4.40" height="2.40" fill="#c8c8c8" />
<path d="M788.0 103.10000000000001 H791.8 L793.6999999999999 105.0 V109.3 H788.0 Z" stroke="#e6e6e6" fill="#3a3a3a" stroke-width="1.1" />
<path d="M786.8 106.2 H790.6" stroke="#19a82a" fill="none" stroke-width="1.2" />
<path d="M789.8 104.8 L791.4 106.2 L789.8 107.6 Z" stroke="none" fill="#19a82a" stroke-width="1" />
<path d="M787.0 118.9 H790.8 L792.6999999999999 120.8 V125.1 H787.0 Z" stroke="#e6e6e6" fill="#3a3a3a" stroke-width="1.1" />
<path d="M790.6 122 H794.2" stroke="#19a82a" fill="none" stroke-width="1.2" />
<path d="M793.4 120.6 L795 122 L793.4 123.4 Z" stroke="none" fill="#19a82a" stroke-width="1" />
<path d="M788.8 140.8 L787.6 139.4 L788.8 138 M787.8 139.4 H791.6 Q793.8 139.4 793.8 141.6" stroke="#707070" fill="none" stroke-width="0.9" />
<path d="M793.6 156.4 L794.8 155 L793.6 153.6 M794.6 155 H790.8 Q788.6 155 788.6 157.2" stroke="#707070" fill="none" stroke-width="0.9" />
<rect x="787.80" y="168.20" width="4.60" height="4.60" fill="#d8d8d8" />
<rect x="790.00" y="170.60" width="4.80" height="4.80" fill="#f0f0f0" stroke="#333" stroke-width="0.6"/>
<path d="M788.8 181 L793.2 188.6 M793.2 181 L788.8 188.6" stroke="#e0e0e0" fill="none" stroke-width="0.9" />
<circle cx="788.80" cy="190.40" r="1.3" fill="none" stroke="#e0e0e0" stroke-width="0.8" />
<circle cx="793.20" cy="190.40" r="1.3" fill="none" stroke="#e0e0e0" stroke-width="0.8" />
<rect x="787.80" y="199.40" width="6.60" height="6.80" fill="#d8d8d8" rx="0.5" />
<rect x="789.60" y="198.60" width="3.00" height="1.40" fill="#f0f0f0" />
<rect x="789.40" y="201.00" width="3.40" height="4.00" fill="#9a9a9a" />
<rect x="783.80" y="212.80" width="13.40" height="13.40" fill="#303030" rx="1.5" stroke="#242424" stroke-width="0.8"/>
<path d="M788.5 219.2 L792.9 219.2 L790.7 221.4 Z" stroke="none" fill="#e8e8e8" stroke-width="1" />
<rect x="0.00" y="369.50" width="800.00" height="17.00" fill="#333333" />
<rect x="15.00" y="371.80" width="9.14" height="6.50" fill="#000000" />
<rect x="15.00" y="378.70" width="9.14" height="7.00" fill="#554400" />
<rect x="24.54" y="371.80" width="9.14" height="6.50" fill="#1a1a1a" />
<rect x="24.54" y="378.70" width="9.14" height="7.00" fill="#806600" />
<rect x="34.07" y="371.80" width="9.14" height="6.50" fill="#333333" />
<rect x="34.07" y="378.70" width="9.14" height="7.00" fill="#aa8800" />
<rect x="43.61" y="371.80" width="9.14" height="6.50" fill="#4d4d4d" />
<rect x="43.61" y="378.70" width="9.14" height="7.00" fill="#d4aa00" />
<rect x="53.14" y="371.80" width="9.14" height="6.50" fill="#666666" />
<rect x="53.14" y="378.70" width="9.14" height="7.00" fill="#ffcc00" />
<rect x="62.68" y="371.80" width="9.14" height="6.50" fill="#808080" />
<rect x="62.68" y="378.70" width="9.14" height="7.00" fill="#ffd42a" />
<rect x="72.21" y="371.80" width="9.14" height="6.50" fill="#999999" />
<rect x="72.21" y="378.70" width="9.14" height="7.00" fill="#ffdd55" />
<rect x="81.75" y="371.80" width="9.14" height="6.50" fill="#b3b3b3" />
<rect x="81.75" y="378.70" width="9.14" height="7.00" fill="#ffe680" />
<rect x="91.29" y="371.80" width="9.14" height="6.50" fill="#cccccc" />
<rect x="91.29" y="378.70" width="9.14" height="7.00" fill="#ffeeaa" />
<rect x="100.82" y="371.80" width="9.14" height="6.50" fill="#e6e6e6" />
<rect x="100.82" y="378.70" width="9.14" height="7.00" fill="#fff6d5" />
<rect x="110.36" y="371.80" width="9.14" height="6.50" fill="#ececec" />
<rect x="110.36" y="378.70" width="9.14" height="7.00" fill="#28220b" />
<rect x="119.89" y="371.80" width="9.14" height="6.50" fill="#f2f2f2" />
<rect x="119.89" y="378.70" width="9.14" height="7.00" fill="#504416" />
<rect x="129.43" y="371.80" width="9.14" height="6.50" fill="#f9f9f9" />
<rect x="129.43" y="378.70" width="9.14" height="7.00" fill="#786721" />
<rect x="138.96" y="371.80" width="9.14" height="6.50" fill="#ffffff" />
<rect x="138.96" y="378.70" width="9.14" height="7.00" fill="#a0892c" />
<rect x="148.50" y="371.80" width="9.27" height="6.50" fill="#800000" />
<rect x="148.50" y="378.70" width="9.27" height="7.00" fill="#c8ab37" />
<rect x="158.17" y="371.80" width="9.27" height="6.50" fill="#ff0000" />
<rect x="158.17" y="378.70" width="9.27" height="7.00" fill="#d3bc5f" />
<rect x="167.83" y="371.80" width="9.27" height="6.50" fill="#808000" />
<rect x="167.83" y="378.70" width="9.27" height="7.00" fill="#decd87" />
<rect x="177.50" y="371.80" width="9.27" height="6.50" fill="#ffff00" />
<rect x="177.50" y="378.70" width="9.27" height="7.00" fill="#e9ddaf" />
<rect x="187.17" y="371.80" width="9.27" height="6.50" fill="#008000" />
<rect x="187.17" y="378.70" width="9.27" height="7.00" fill="#f4eed7" />
<rect x="196.83" y="371.80" width="9.27" height="6.50" fill="#00ff00" />
<rect x="196.83" y="378.70" width="9.27" height="7.00" fill="#24221c" />
<rect x="206.50" y="371.80" width="9.18" height="6.50" fill="#008080" />
<rect x="206.50" y="378.70" width="9.18" height="7.00" fill="#484537" />
<rect x="216.08" y="371.80" width="9.18" height="6.50" fill="#00ffff" />
<rect x="216.08" y="378.70" width="9.18" height="7.00" fill="#6c6753" />
<rect x="225.67" y="371.80" width="9.18" height="6.50" fill="#000080" />
<rect x="225.67" y="378.70" width="9.18" height="7.00" fill="#918a6f" />
<rect x="235.25" y="371.80" width="9.18" height="6.50" fill="#0000ff" />
<rect x="235.25" y="378.70" width="9.18" height="7.00" fill="#aca793" />
<rect x="244.83" y="371.80" width="9.18" height="6.50" fill="#800080" />
<rect x="244.83" y="378.70" width="9.18" height="7.00" fill="#c8c4b7" />
<rect x="254.42" y="371.80" width="9.18" height="6.50" fill="#ff00ff" />
<rect x="254.42" y="378.70" width="9.18" height="7.00" fill="#e3e2db" />
<rect x="264.00" y="371.80" width="9.16" height="6.50" fill="#2b0000" />
<rect x="264.00" y="378.70" width="9.16" height="7.00" fill="#222b00" />
<rect x="273.56" y="371.80" width="9.16" height="6.50" fill="#550000" />
<rect x="273.56" y="378.70" width="9.16" height="7.00" fill="#445500" />
<rect x="283.12" y="371.80" width="9.16" height="6.50" fill="#800000" />
<rect x="283.12" y="378.70" width="9.16" height="7.00" fill="#668000" />
<rect x="292.69" y="371.80" width="9.16" height="6.50" fill="#aa0000" />
<rect x="292.69" y="378.70" width="9.16" height="7.00" fill="#88aa00" />
<rect x="302.25" y="371.80" width="9.16" height="6.50" fill="#d40000" />
<rect x="302.25" y="378.70" width="9.16" height="7.00" fill="#aad400" />
<rect x="311.81" y="371.80" width="9.16" height="6.50" fill="#ff0000" />
<rect x="311.81" y="378.70" width="9.16" height="7.00" fill="#ccff00" />
<rect x="321.38" y="371.80" width="9.16" height="6.50" fill="#ff2a2a" />
<rect x="321.38" y="378.70" width="9.16" height="7.00" fill="#d4ff2a" />
<rect x="330.94" y="371.80" width="9.16" height="6.50" fill="#ff5555" />
<rect x="330.94" y="378.70" width="9.16" height="7.00" fill="#ddff55" />
<rect x="340.50" y="371.80" width="8.83" height="6.50" fill="#ff8080" />
<rect x="340.50" y="378.70" width="8.83" height="7.00" fill="#e5ff80" />
<rect x="349.73" y="371.80" width="8.83" height="6.50" fill="#ffaaaa" />
<rect x="349.73" y="378.70" width="8.83" height="7.00" fill="#eeffaa" />
<rect x="358.95" y="371.80" width="8.83" height="6.50" fill="#ffd5d5" />
<rect x="358.95" y="378.70" width="8.83" height="7.00" fill="#f6ffd5" />
<rect x="368.18" y="371.80" width="8.83" height="6.50" fill="#280b0b" />
<rect x="368.18" y="378.70" width="8.83" height="7.00" fill="#22280b" />
<rect x="377.41" y="371.80" width="8.83" height="6.50" fill="#501616" />
<rect x="377.41" y="378.70" width="8.83" height="7.00" fill="#445016" />
<rect x="386.64" y="371.80" width="8.83" height="6.50" fill="#782121" />
<rect x="386.64" y="378.70" width="8.83" height="7.00" fill="#677821" />
<rect x="395.86" y="371.80" width="8.83" height="6.50" fill="#a02c2c" />
<rect x="395.86" y="378.70" width="8.83" height="7.00" fill="#89a02c" />
<rect x="405.09" y="371.80" width="8.83" height="6.50" fill="#c83737" />
<rect x="405.09" y="378.70" width="8.83" height="7.00" fill="#abc837" />
<rect x="414.32" y="371.80" width="8.83" height="6.50" fill="#d35f5f" />
<rect x="414.32" y="378.70" width="8.83" height="7.00" fill="#bcd35f" />
<rect x="423.55" y="371.80" width="8.83" height="6.50" fill="#de8787" />
<rect x="423.55" y="378.70" width="8.83" height="7.00" fill="#cdde87" />
<rect x="432.77" y="371.80" width="8.83" height="6.50" fill="#e9afaf" />
<rect x="432.77" y="378.70" width="8.83" height="7.00" fill="#dde9af" />
<rect x="442.00" y="371.80" width="9.80" height="6.50" fill="#f4d7d7" />
<rect x="442.00" y="378.70" width="9.80" height="7.00" fill="#eef4d7" />
<rect x="452.20" y="371.80" width="8.75" height="6.50" fill="#241c1c" />
<rect x="452.20" y="378.70" width="8.75" height="7.00" fill="#23241c" />
<rect x="461.35" y="371.80" width="8.75" height="6.50" fill="#483737" />
<rect x="461.35" y="378.70" width="8.75" height="7.00" fill="#454837" />
<rect x="470.50" y="371.80" width="8.75" height="6.50" fill="#6c5353" />
<rect x="470.50" y="378.70" width="8.75" height="7.00" fill="#676c53" />
<rect x="479.65" y="371.80" width="8.75" height="6.50" fill="#916f6f" />
<rect x="479.65" y="378.70" width="8.75" height="7.00" fill="#8a916f" />
<rect x="488.80" y="371.80" width="8.75" height="6.50" fill="#ac9393" />
<rect x="488.80" y="378.70" width="8.75" height="7.00" fill="#a7ac93" />
<rect x="497.95" y="371.80" width="8.75" height="6.50" fill="#c8b7b7" />
<rect x="497.95" y="378.70" width="8.75" height="7.00" fill="#c4c8b7" />
<rect x="507.10" y="371.80" width="8.75" height="6.50" fill="#e3dbdb" />
<rect x="507.10" y="378.70" width="8.75" height="7.00" fill="#e2e3db" />
<rect x="516.25" y="371.80" width="8.75" height="6.50" fill="#2b1100" />
<rect x="516.25" y="378.70" width="8.75" height="7.00" fill="#112b00" />
<rect x="525.40" y="371.80" width="8.75" height="6.50" fill="#552200" />
<rect x="525.40" y="378.70" width="8.75" height="7.00" fill="#225500" />
<rect x="534.55" y="371.80" width="8.75" height="6.50" fill="#803300" />
<rect x="534.55" y="378.70" width="8.75" height="7.00" fill="#338000" />
<rect x="543.70" y="371.80" width="8.75" height="6.50" fill="#aa4400" />
<rect x="543.70" y="378.70" width="8.75" height="7.00" fill="#44aa00" />
<rect x="552.85" y="371.80" width="8.75" height="6.50" fill="#d45500" />
<rect x="552.85" y="378.70" width="8.75" height="7.00" fill="#55d400" />
<rect x="562.00" y="371.80" width="8.77" height="6.50" fill="#ff6600" />
<rect x="562.00" y="378.70" width="8.77" height="7.00" fill="#66ff00" />
<rect x="571.17" y="371.80" width="8.77" height="6.50" fill="#ff7f2a" />
<rect x="571.17" y="378.70" width="8.77" height="7.00" fill="#7fff2a" />
<rect x="580.33" y="371.80" width="8.77" height="6.50" fill="#ff9955" />
<rect x="580.33" y="378.70" width="8.77" height="7.00" fill="#99ff55" />
<rect x="589.50" y="371.80" width="8.77" height="6.50" fill="#ffb380" />
<rect x="589.50" y="378.70" width="8.77" height="7.00" fill="#b3ff80" />
<rect x="598.67" y="371.80" width="8.77" height="6.50" fill="#ffccaa" />
<rect x="598.67" y="378.70" width="8.77" height="7.00" fill="#ccffaa" />
<rect x="607.83" y="371.80" width="8.77" height="6.50" fill="#ffe6d5" />
<rect x="607.83" y="378.70" width="8.77" height="7.00" fill="#e5ffd5" />
<rect x="617.00" y="371.80" width="8.77" height="6.50" fill="#28170b" />
<rect x="617.00" y="378.70" width="8.77" height="7.00" fill="#1c280b" />
<rect x="626.17" y="371.80" width="8.77" height="6.50" fill="#502d16" />
<rect x="626.17" y="378.70" width="8.77" height="7.00" fill="#375016" />
<rect x="635.33" y="371.80" width="8.77" height="6.50" fill="#784421" />
<rect x="635.33" y="378.70" width="8.77" height="7.00" fill="#537821" />
<rect x="644.50" y="371.80" width="8.77" height="6.50" fill="#a05a2c" />
<rect x="644.50" y="378.70" width="8.77" height="7.00" fill="#6fa02c" />
<rect x="653.67" y="371.80" width="8.77" height="6.50" fill="#c87137" />
<rect x="653.67" y="378.70" width="8.77" height="7.00" fill="#89c837" />
<rect x="662.83" y="371.80" width="8.77" height="6.50" fill="#d38d5f" />
<rect x="662.83" y="378.70" width="8.77" height="7.00" fill="#8dd35f" />
<rect x="672.00" y="371.80" width="8.77" height="6.50" fill="#deaa87" />
<rect x="672.00" y="378.70" width="8.77" height="7.00" fill="#aade87" />
<rect x="681.17" y="371.80" width="8.77" height="6.50" fill="#e9c6af" />
<rect x="681.17" y="378.70" width="8.77" height="7.00" fill="#c6e9af" />
<rect x="690.33" y="371.80" width="8.77" height="6.50" fill="#f4e3d7" />
<rect x="690.33" y="378.70" width="8.77" height="7.00" fill="#e3f4d7" />
<rect x="699.50" y="371.80" width="8.81" height="6.50" fill="#241f1c" />
<rect x="699.50" y="378.70" width="8.81" height="7.00" fill="#1e241c" />
<rect x="708.71" y="371.80" width="8.81" height="6.50" fill="#483e37" />
<rect x="708.71" y="378.70" width="8.81" height="7.00" fill="#3b4837" />
<rect x="717.93" y="371.80" width="8.81" height="6.50" fill="#6c5d53" />
<rect x="717.93" y="378.70" width="8.81" height="7.00" fill="#596c53" />
<rect x="727.14" y="371.80" width="8.81" height="6.50" fill="#917c6f" />
<rect x="727.14" y="378.70" width="8.81" height="7.00" fill="#76916f" />
<rect x="736.36" y="371.80" width="8.81" height="6.50" fill="#ac9d93" />
<rect x="736.36" y="378.70" width="8.81" height="7.00" fill="#93ac93" />
<rect x="745.57" y="371.80" width="8.81" height="6.50" fill="#c8beb7" />
<rect x="745.57" y="378.70" width="8.81" height="7.00" fill="#b7c8b7" />
<rect x="754.79" y="371.80" width="8.81" height="6.50" fill="#e3dedb" />
<rect x="754.79" y="378.70" width="8.81" height="7.00" fill="#dbe3db" />
<rect x="764.00" y="371.80" width="8.60" height="6.50" fill="#2b2200" />
<rect x="764.00" y="378.70" width="8.60" height="7.00" fill="#002b00" />
<rect x="0.50" y="372.00" width="13.50" height="13.60" fill="#ffffff" />
<path d="M2.2 374 L12.4 384 M12.4 374 L2.2 384" stroke="#d4304a" fill="none" stroke-width="1.3" />
<path d="M775 380.4 L777.6 377.6 L780.2 380.4" stroke="#8a8a8a" fill="none" stroke-width="0.8" />
<path d="M784 377.6 L787 380.6 L790 377.6" stroke="#e0e0e0" fill="none" stroke-width="1.0" />
<line x1="793.20" y1="378.20" x2="799.00" y2="378.20" stroke="#d8d8d8" stroke-width="0.9" />
<line x1="793.20" y1="380.50" x2="799.00" y2="380.50" stroke="#d8d8d8" stroke-width="0.9" />
<line x1="793.20" y1="382.80" x2="799.00" y2="382.80" stroke="#d8d8d8" stroke-width="0.9" />
<rect x="0.00" y="386.00" width="800.00" height="21.00" fill="#363636" />
<text x="10.00" y="394.60" font-size="7.7" fill="#d2d2d2" stroke="#d2d2d2" stroke-width="0.05" textLength="21.0" lengthAdjust="spacingAndGlyphs" >Fond :</text>
<text x="0.50" y="405.00" font-size="7.7" fill="#d2d2d2" stroke="#d2d2d2" stroke-width="0.05" textLength="30.5" lengthAdjust="spacingAndGlyphs" >Contour :</text>
<text x="43.00" y="394.60" font-size="7.7" fill="#d2d2d2" stroke="#d2d2d2" stroke-width="0.05" textLength="13.5" lengthAdjust="spacingAndGlyphs" >N/A</text>
<text x="43.00" y="405.00" font-size="7.7" fill="#d2d2d2" stroke="#d2d2d2" stroke-width="0.05" textLength="13.5" lengthAdjust="spacingAndGlyphs" >N/A</text>
<text x="80.00" y="399.80" font-size="7.7" fill="#d2d2d2" stroke="#d2d2d2" stroke-width="0.05" textLength="10.0" lengthAdjust="spacingAndGlyphs" >O :</text>
<rect x="91.80" y="386.50" width="30.60" height="21.00" fill="#2e2e2e" rx="2" stroke="#363636" stroke-width="0.5"/>
<text x="94.00" y="399.80" font-size="7.7" fill="#787878" stroke="#787878" stroke-width="0.05" textLength="13.0" lengthAdjust="spacingAndGlyphs" >100</text>
<line x1="108.60" y1="397.30" x2="113.60" y2="397.30" stroke="#5a5a5a" stroke-width="0.8" />
<line x1="115.40" y1="397.30" x2="120.40" y2="397.30" stroke="#5a5a5a" stroke-width="0.8" />
<line x1="117.90" y1="394.80" x2="117.90" y2="399.80" stroke="#5a5a5a" stroke-width="0.8" />
<rect x="126.80" y="390.80" width="1.80" height="11.60" fill="#3a7fe0" />
<text x="131.00" y="399.50" font-size="7.7" fill="#dadada" stroke="#dadada" stroke-width="0.05" textLength="29.2" lengthAdjust="spacingAndGlyphs" >Calque 1</text>
<path d="M167.8 397.6 Q171.4 393.2 175 397.6 Q171.4 401.4 167.8 397.6 Z" stroke="none" fill="#e8e8e8" stroke-width="1" />
<circle cx="171.40" cy="397.50" r="1.2" fill="#2c2c2c" stroke="none" stroke-width="1" />
<circle cx="171.40" cy="397.50" r="0.5" fill="#e8e8e8" stroke="none" stroke-width="1" />
<path d="M168.8 395.2 L168 394.4 M171.4 394.4 V393.4 M174 395.2 L174.8 394.4" stroke="#e8e8e8" fill="none" stroke-width="0.6" />
<rect x="184.00" y="396.60" width="4.80" height="3.80" fill="#f0f0f0" rx="0.4" />
<path d="M187.6 396.8 V395.6 A1.2 1.2 0 0 1 190 395.6 V396.4" stroke="#f0f0f0" fill="none" stroke-width="0.8" />
<text x="197.00" y="394.30" font-size="7.7" fill="#dadada" stroke="#dadada" stroke-width="0.05" textLength="376.7" lengthAdjust="spacingAndGlyphs" >Aucun objet sélectionné. Sélectionnez des objets par Clic, Maj+Clic ou Alt+molette, ou cliquez-déplacez autour des</text>
<text x="197.00" y="404.80" font-size="7.7" fill="#dadada" stroke="#dadada" stroke-width="0.05" textLength="68.0" lengthAdjust="spacingAndGlyphs" >objets à sélectionner.</text>
<rect x="606.60" y="387.20" width="13.40" height="22.00" fill="#2c2c2c" rx="2" stroke="#262626" stroke-width="0.8"/>
<path d="M599.6 395.2 L597.2 397.6 L599.6 400 Z" stroke="none" fill="#7a7a7a" stroke-width="1" />
<path d="M611.6 396.6 L615.4 396.6 L613.5 398.8 Z" stroke="none" fill="#c8c8c8" stroke-width="1" />
<path d="M627.2 395.2 L629.6 397.6 L627.2 400 Z" stroke="none" fill="#7a7a7a" stroke-width="1" />
<text x="638.80" y="395.00" font-size="7.7" fill="#cdcdcd" stroke="#cdcdcd" stroke-width="0.05" textLength="8.4" lengthAdjust="spacingAndGlyphs" >X :</text>
<text x="653.50" y="395.00" font-size="7.7" fill="#d4d4d4" stroke="#d4d4d4" stroke-width="0.05" textLength="22.9" lengthAdjust="spacingAndGlyphs" >242,86</text>
<text x="638.80" y="405.20" font-size="7.7" fill="#cdcdcd" stroke="#cdcdcd" stroke-width="0.05" textLength="8.4" lengthAdjust="spacingAndGlyphs" >Y :</text>
<text x="655.50" y="405.20" font-size="7.7" fill="#d4d4d4" stroke="#d4d4d4" stroke-width="0.05" textLength="20.5" lengthAdjust="spacingAndGlyphs" >-15,57</text>
<text x="681.00" y="400.00" font-size="7.7" fill="#cdcdcd" stroke="#cdcdcd" stroke-width="0.05" textLength="9.0" lengthAdjust="spacingAndGlyphs" >Z :</text>
<rect x="691.40" y="387.00" width="42.60" height="20.00" fill="#2e2e2e" rx="2" stroke="#363636" stroke-width="0.5"/>
<text x="699.00" y="400.20" font-size="7.7" fill="#d4d4d4" stroke="#d4d4d4" stroke-width="0.05" textLength="15.2" lengthAdjust="spacingAndGlyphs" >54%</text>
<line x1="720.60" y1="397.60" x2="726.00" y2="397.60" stroke="#d8d8d8" stroke-width="0.9" />
<line x1="727.40" y1="397.60" x2="732.80" y2="397.60" stroke="#d8d8d8" stroke-width="0.9" />
<line x1="730.10" y1="394.90" x2="730.10" y2="400.30" stroke="#d8d8d8" stroke-width="0.9" />
<text x="738.80" y="400.20" font-size="7.7" fill="#cdcdcd" stroke="#cdcdcd" stroke-width="0.05" textLength="7.4" lengthAdjust="spacingAndGlyphs" >R :</text>
<rect x="749.40" y="387.00" width="46.60" height="20.00" fill="#2e2e2e" rx="2" stroke="#363636" stroke-width="0.5"/>
<text x="758.50" y="400.20" font-size="7.7" fill="#d4d4d4" stroke="#d4d4d4" stroke-width="0.05" textLength="17.5" lengthAdjust="spacingAndGlyphs" >0,00°</text>
<line x1="783.00" y1="397.60" x2="788.40" y2="397.60" stroke="#d8d8d8" stroke-width="0.9" />
<line x1="789.80" y1="397.60" x2="795.20" y2="397.60" stroke="#d8d8d8" stroke-width="0.9" />
<line x1="792.50" y1="394.90" x2="792.50" y2="400.30" stroke="#d8d8d8" stroke-width="0.9" />
</svg></body></html>
